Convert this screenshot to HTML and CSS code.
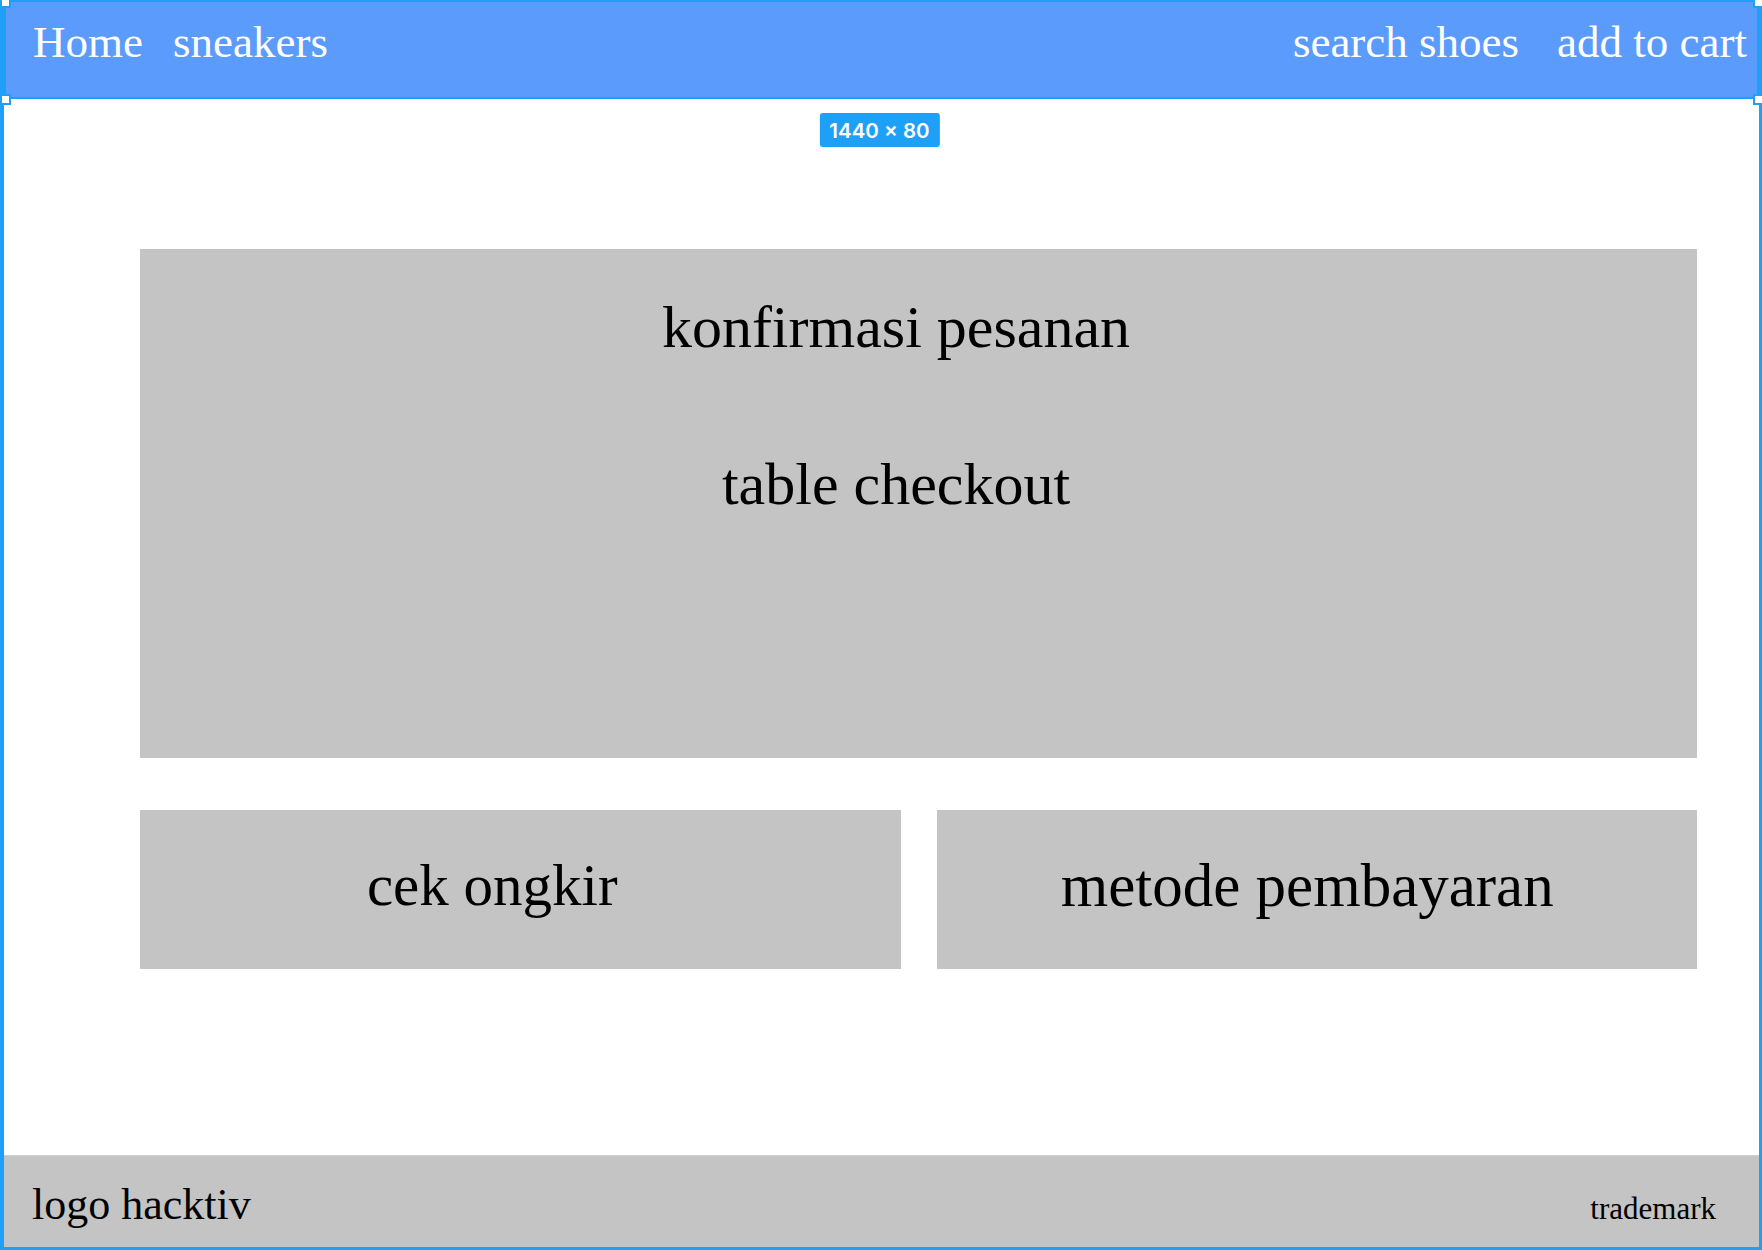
FILE: index.html
```html
<!DOCTYPE html>
<html lang="id">
<head>
<meta charset="utf-8">
<title>Checkout</title>
<link rel="stylesheet" href="styles.css">
</head>
<body>
<div class="frame">
  <nav class="nav">
    <div class="nav-left">
      <span class="nav-link">Home</span>
      <span class="nav-link">sneakers</span>
    </div>
    <div class="nav-right">
      <span class="nav-link">search shoes</span>
      <span class="nav-link">add to cart</span>
    </div>
    <span class="handle handle-tl"></span>
    <span class="handle handle-tr"></span>
    <span class="handle handle-bl"></span>
    <span class="handle handle-br"></span>
    <span class="size-badge">1440 × 80</span>
  </nav>

  <main class="content">
    <section class="box box-main">
      <h2 class="box-title">konfirmasi pesanan</h2>
      <p class="box-sub">table checkout</p>
    </section>
    <div class="row">
      <section class="box box-small box-ongkir">
        <span class="box-label">cek ongkir</span>
      </section>
      <section class="box box-small box-bayar">
        <span class="box-label">metode pembayaran</span>
      </section>
    </div>
  </main>

  <footer class="footer">
    <span class="footer-logo">logo hacktiv</span>
    <span class="footer-tm">trademark</span>
  </footer>
</div>
</body>
</html>
```

FILE: styles.css
```css
* { box-sizing: border-box; }

html, body {
  margin: 0;
  padding: 0;
  background: #ffffff;
}

body {
  width: 1762px;
  height: 1250px;
  overflow: hidden;
  font-family: "Liberation Serif", "Times New Roman", serif;
  color: #000;
}

.frame {
  position: relative;
  height: 1250px;
  display: flex;
  flex-direction: column;
  border-left: 4px solid #1fa0f7;
  border-right: 3px solid #1fa0f7;
  border-bottom: 3px solid #1fa0f7;
}

/* ---------- nav ---------- */
.nav {
  position: relative;
  height: 99px;
  flex: 0 0 auto;
  display: flex;
  justify-content: space-between;
  align-items: flex-start;
  background: #5b9bfb;
  border: 2px solid #1fa0f7;
  padding: 18px 10px 0 27px;
}

.nav-left,
.nav-right {
  display: flex;
}

.nav-left { gap: 30px; }
.nav-right { gap: 38px; }

.nav-link {
  font-size: 45px;
  line-height: 45px;
  color: #ffffff;
  white-space: nowrap;
}

.handle {
  position: absolute;
  width: 11px;
  height: 11px;
  background: #ffffff;
  border: 2px solid #1fa0f7;
}
.handle-tl { left: -6px; top: -5px; }
.handle-tr { right: -7px; top: -5px; }
.handle-bl { left: -6px; bottom: -8px; }
.handle-br { right: -7px; bottom: -8px; }

.size-badge {
  position: absolute;
  top: 111px;
  left: 50%;
  transform: translateX(-50%);
  margin-left: -2px;
  height: 34px;
  padding: 0 10px;
  display: flex;
  align-items: center;
  background: #1fa0f7;
  color: #ffffff;
  border-radius: 3px;
  font-family: Inter, "Noto Sans", sans-serif;
  font-weight: 600;
  font-size: 20.5px;
  white-space: nowrap;
}

/* ---------- content ---------- */
.content {
  flex: 0 0 auto;
  padding: 150px 62px 0 136px;
  display: flex;
  flex-direction: column;
  gap: 52px;
}

.box {
  background: #c4c4c4;
}

.box-main {
  height: 509px;
  padding: 48px 45px 0 0;
  text-align: center;
}

.box-title,
.box-sub {
  margin: 0;
  font-weight: normal;
  font-size: 60px;
  line-height: 60px;
}

.box-sub {
  margin-top: 97px;
}

.row {
  display: grid;
  grid-template-columns: 1fr 1fr;
  gap: 36px;
}

.box-small {
  height: 159px;
  padding-top: 46px;
  text-align: center;
}

.box-ongkir { padding-right: 56px; }
.box-bayar { padding-right: 19px; }

.box-label {
  display: block;
  font-size: 59px;
  line-height: 59px;
  white-space: nowrap;
}

.box-bayar .box-label {
  font-size: 61px;
  line-height: 59px;
}

/* ---------- footer ---------- */
.footer {
  margin-top: auto;
  height: 92px;
  flex: 0 0 auto;
  background: #c4c4c4;
  border-top: 1px solid #cfcfcf;
  display: flex;
  justify-content: space-between;
  align-items: baseline;
  padding: 27px 43px 0 28px;
}

.footer-logo {
  font-size: 44px;
  line-height: 44px;
}

.footer-tm {
  font-size: 31px;
  line-height: 31px;
}
```
